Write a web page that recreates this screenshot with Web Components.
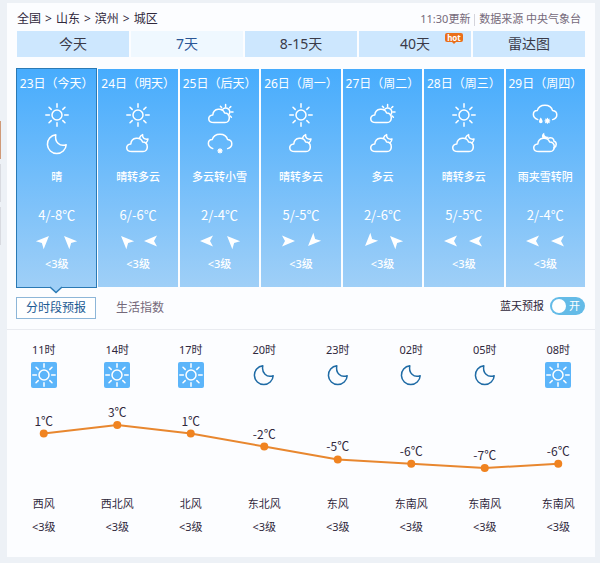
<!DOCTYPE html>
<html lang="zh-CN">
<head>
<meta charset="utf-8">
<meta name="viewport" content="width=device-width, initial-scale=1">
<title>滨州天气预报</title>
<style>
    body {
        margin: 0;
        padding: 3px 5px 6px 0;
        display: flex;
        background: #edf1f6;
        color: #30283c;
        font-family: "Noto Sans", "Noto Sans CJK SC", sans-serif;
        font-size: 11px;
        line-height: 16px;
    }

    weather-panel {
        flex: 1;
    }
</style>
</head>
<body>
<side-rail></side-rail>
<weather-panel>
    <crumb-bar slot="top" path="全国,山东,滨州,城区">11:30更新 <i></i> 数据来源 中央气象台</crumb-bar>
    <range-tabs slot="top"></range-tabs>
    <day-list slot="top"></day-list>
    <detail-bar slot="top"></detail-bar>
    <hour-forecast></hour-forecast>
</weather-panel>

<script>
const days = [
    { date: "23日（今天）", icons: ["sun", "moon"], text: "晴", temp: "4/-8℃", wind: [-45, -135] },
    { date: "24日（明天）", icons: ["sun", "cloudMoon"], text: "晴转多云", temp: "6/-6℃", wind: [-135, 180] },
    { date: "25日（后天）", icons: ["cloudSun", "snow"], text: "多云转小雪", temp: "2/-4℃", wind: [180, -135] },
    { date: "26日（周一）", icons: ["sun", "cloudMoon"], text: "晴转多云", temp: "5/-5℃", wind: [0, 135] },
    { date: "27日（周二）", icons: ["cloudSun", "cloudMoon"], text: "多云", temp: "2/-6℃", wind: [135, -135] },
    { date: "28日（周三）", icons: ["sun", "cloudMoon"], text: "晴转多云", temp: "5/-5℃", wind: [180, 180] },
    { date: "29日（周四）", icons: ["sleet", "overcast"], text: "雨夹雪转阴", temp: "2/-4℃", wind: [180, 180] }
];

const hours = [
    { time: "11时", icon: "sun", temp: 1, wind: "西风" },
    { time: "14时", icon: "sun", temp: 3, wind: "西北风" },
    { time: "17时", icon: "sun", temp: 1, wind: "北风" },
    { time: "20时", icon: "moon", temp: -2, wind: "东北风" },
    { time: "23时", icon: "moon", temp: -5, wind: "东风" },
    { time: "02时", icon: "moon", temp: -6, wind: "东南风" },
    { time: "05时", icon: "moon", temp: -7, wind: "东南风" },
    { time: "08时", icon: "sun", temp: -6, wind: "东南风" }
];

const cloud = "M6 19.6C-.8 19.6-.8 12.4 4.8 12C5.4 4.8 14.6 4.6 16.6 10C22.8 10 22.8 19.6 17 19.6Z";
const openCloud = "M4.8 16.6C-1.6 14.2-.4 7.8 4.2 7.6C6.4.6 17.6.6 19.6 7.6C25 8.4 25.4 14.8 19.6 16.6";

const icons = {
    sun: `<circle cx="12" cy="12" r="5"/>
        <path d="M12 .8V4.2M12 19.8V23.2M.8 12H4.4M19.6 12H23.2M4 4.2L6.2 6.4M17.8 17.6L20 19.8M20 4.2L17.8 6.4M6.2 17.6L4 19.8"/>`,
    moon: `<path d="M10.8 2.8C9.4 9.6 14.6 15.2 21.2 12.7A9.4 9.4 0 1 1 10.8 2.8Z"/>`,
    cloudMoon: `<path d="${cloud}"/>
        <path d="M13.4 6.2C14 4.4 15 3.2 16.6 2.6C16.2 5.6 18.4 7.8 22 7C21.8 8.6 21.2 9.8 20 11"/>`,
    cloudSun: `<path d="${cloud}"/>
        <path d="M14.2 7.2A4 4 0 1 1 20.4 12M17.6 1.6V3.4M12.4 3.2L13.6 4.6M22.8 3.6L21.6 4.8M23 9H25M22.2 13L23.4 14.2"/>`,
    snow: `<path d="${openCloud}"/>
        <path class="flake" d="M12 16.6V21M9.8 18.8H14.2M10.5 17.3L13.5 20.3M13.5 17.3L10.5 20.3"/>`,
    sleet: `<path d="${openCloud}"/>
        <path class="solid" d="M7.8 14.6C10.4 18.2 10 20.2 7.8 20.2S5.2 18.2 7.8 14.6Z"/>
        <path class="flake" d="M14.4 15.4V20.2M12 17.8H16.8M12.7 16.1L16.1 19.5M16.1 16.1L12.7 19.5"/>`,
    overcast: `<path d="${cloud}"/>
        <path d="M15 6.4C18.4 4.6 21 6.6 21 9.2C24 10 24 14.6 20.8 16"/>
        <path class="solid" d="M11.2.8C11 3.6 12.6 5.2 15.6 4.8C14.2 7.6 10.2 7.6 9.2 5.4C8.4 3.6 9.4 1.6 11.2.8Z"/>`
};

function define(name, render) {
    customElements.define(name, class extends HTMLElement {
        constructor() {
            super();
            this.attachShadow({ mode: "open" });
        }

        connectedCallback() {
            this.shadowRoot.innerHTML = render(this);
        }
    });
}

define("weather-icon", el => `
    <style>
        :host { display: block; width: 24px; height: 24px; }
        svg { display: block; overflow: visible; }
        path, circle {
            fill: none;
            stroke: currentColor;
            stroke-width: 1.5;
            stroke-linecap: round;
            stroke-linejoin: round;
        }
        .flake { stroke-width: 1.2; }
        .solid { fill: currentColor; stroke: none; }
    </style>
    <svg width="24" height="24" viewBox="0 0 24 24" aria-hidden="true">${icons[el.getAttribute("name")]}</svg>
`);

define("wind-arrow", el => `
    <style>
        :host { display: block; width: 12px; height: 12px; }
        svg { display: block; overflow: visible; }
    </style>
    <svg width="12" height="12" viewBox="-6 -6 12 12" aria-hidden="true">
        <path d="M7 0L-6 5.5L-3 0L-6 -5.5Z" fill="currentColor" transform="rotate(${el.getAttribute("angle")})"/>
    </svg>
`);

// edges of the neighbouring widgets
define("side-rail", () => `
    <style>
        :host {
            display: flex;
            flex-direction: column;
            gap: 5px;
            width: 7px;
            padding-top: 118px;
        }
        div { width: 1px; height: 38px; background: #d8dae0; }
        .warm { background: #d09a78; }
    </style>
    <div class="warm"></div><div></div><div></div>
`);

define("weather-panel", () => `
    <style>
        :host { display: block; background: #fcfdff; }
        .top { padding: 8px 10px 10px; }
    </style>
    <div class="top"><slot name="top"></slot></div>
    <slot></slot>
`);

define("crumb-bar", el => `
    <style>
        :host { display: flex; justify-content: space-between; padding-right: 4px; }
        nav { display: flex; gap: 4px; font-size: 12px; }
        a { color: inherit; text-decoration: none; }
        .source { color: #75697a; }
        ::slotted(i) {
            display: inline-block;
            width: 1px;
            height: 12px;
            margin: 0 1px;
            background: #d5d5dc;
            vertical-align: middle;
        }
    </style>
    <nav>${el.getAttribute("path").split(",").map(p => `<a href="#">${p}</a>`).join("<span>&gt;</span>")}</nav>
    <div class="source"><slot></slot></div>
`);

define("range-tabs", () => `
    <style>
        :host { display: grid; grid-template-columns: repeat(5, 1fr); gap: 2px; margin-top: 4px; }
        a {
            position: relative;
            background: #cde7fe;
            color: #3a3a48;
            font-size: 14px;
            line-height: 26px;
            text-align: center;
            text-decoration: none;
        }
        a.active { background: #eff8ff; color: #2a5696; }
        .hot {
            position: absolute;
            top: 2px;
            right: 8px;
            width: 18px;
            height: 9px;
            border-radius: 2px;
            background: #ea6f1b;
            color: #fff;
            font-size: 8px;
            font-weight: 700;
            line-height: 9px;
        }
        .hot::after {
            content: "";
            position: absolute;
            left: 7px;
            top: 9px;
            border: 2px solid transparent;
            border-top-color: #ea6f1b;
        }
    </style>
    <a href="#">今天</a>
    <a href="#" class="active">7天</a>
    <a href="#">8-15天</a>
    <a href="#">40天<span class="hot">hot</span></a>
    <a href="#">雷达图</a>
`);

define("day-list", () => `
    <style>
        :host { display: grid; grid-template-columns: repeat(7, 1fr); gap: 2px; margin-top: 12px; }
    </style>
    ${days.map((d, i) => `<day-card index="${i}"></day-card>`).join("")}
`);

define("day-card", el => {
    const d = days[el.getAttribute("index")];
    const active = el.getAttribute("index") === "0";
    return `
    <style>
        :host { display: block; position: relative; }
        button {
            display: flex;
            flex-direction: column;
            align-items: center;
            width: 100%;
            padding: 7px 0 15px;
            border: 0;
            background: linear-gradient(#47acfd, #9fcff7);
            color: #fff;
            font: inherit;
            white-space: nowrap;
        }
        button.active { outline: 1px solid #2a79b4; }
        .date { font-size: 12px; margin-bottom: 11px; }
        .icons { display: grid; gap: 5px; }
        .text { margin-top: 13px; font-weight: 500; }
        .temp {
            margin-top: 22px;
            font-family: "Noto Sans CJK SC", sans-serif;
            font-size: 13px;
        }
        .wind { display: flex; gap: 13px; margin-top: 12px; }
        .level { margin-top: 9px; font-weight: 500; }
        .notch { position: absolute; left: 33px; bottom: -7px; }
    </style>
    <button type="button" class="${active ? "active" : ""}">
        <span class="date">${d.date}</span>
        <span class="icons">${d.icons.map(n => `<weather-icon name="${n}"></weather-icon>`).join("")}</span>
        <span class="text">${d.text}</span>
        <span class="temp">${d.temp}</span>
        <span class="wind">${d.wind.map(a => `<wind-arrow angle="${a}"></wind-arrow>`).join("")}</span>
        <span class="level">&lt;3级</span>
    </button>
    ${active ? `<svg class="notch" width="12" height="8" viewBox="0 0 12 8" aria-hidden="true">
        <path d="M0 0H12V1L6 6.5L0 1Z" fill="#9fcff7"/>
        <path d="M0 1L6 6.5L12 1" fill="none" stroke="#2a79b4" stroke-width="1.3"/>
    </svg>` : ""}`;
});

define("detail-bar", () => `
    <style>
        :host { display: flex; align-items: flex-start; margin-top: 10px; }
        button {
            height: 22px;
            margin-left: -1px;
            padding: 0 9px;
            border: 1px solid transparent;
            background: none;
            color: #75697a;
            font: inherit;
            font-size: 12px;
            line-height: 20px;
        }
        button.active { border-color: #8db6d8; color: #1c5b94; background: #fff; }
        button + button { margin-left: 10px; }
        label { display: flex; align-items: center; gap: 6px; margin-left: auto; }
        .switch {
            display: flex;
            align-items: center;
            justify-content: space-between;
            box-sizing: border-box;
            width: 35px;
            height: 18px;
            padding: 0 5px 0 2px;
            border-radius: 9px;
            background: #64bbe7;
            color: #fff;
        }
        input {
            appearance: none;
            width: 14px;
            height: 14px;
            margin: 0;
            border-radius: 50%;
            background: #fff;
        }
    </style>
    <button type="button" class="active">分时段预报</button>
    <button type="button">生活指数</button>
    <label>蓝天预报<span class="switch"><input type="checkbox" checked>开</span></label>
`);

define("temp-chart", () => {
    const x = i => (i + 0.5) * 100 / hours.length + "%";
    const y = t => 37 + (3 - t) * 4.3;
    return `
    <style>
        :host { display: block; height: 100px; }
        svg { display: block; width: 100%; height: 100%; }
        line { stroke: #e8872f; stroke-width: 2; }
        circle { fill: #f08320; }
        text {
            fill: #30283c;
            font-family: "Noto Sans CJK SC", sans-serif;
            font-size: 12px;
            text-anchor: middle;
        }
    </style>
    <svg>
        ${hours.slice(1).map((h, i) => `<line x1="${x(i)}" y1="${y(hours[i].temp)}" x2="${x(i + 1)}" y2="${y(h.temp)}"/>`).join("")}
        ${hours.map((h, i) => `
            <circle cx="${x(i)}" cy="${y(h.temp)}" r="4"/>
            <text x="${x(i)}" y="${y(h.temp) - 8}">${h.temp}℃</text>`).join("")}
    </svg>`;
});

define("hour-forecast", () => `
    <style>
        :host { display: block; padding: 12px 0 22px; border-top: 1px solid #e9ebf0; }
        .row { display: grid; grid-template-columns: repeat(8, 1fr); justify-items: center; }
        .row > div { display: flex; flex-direction: column; align-items: center; }
        .head > div { gap: 4px; }
        .foot { margin-top: 8px; }
        .foot > div { gap: 7px; }
        .icon { padding: 1px; border-radius: 2px; color: #1f6ba5; }
        .icon.sun { background: #5cb5fa; color: #fff; }
    </style>
    <div class="row head">
        ${hours.map(h => `<div>${h.time}<span class="icon ${h.icon}"><weather-icon name="${h.icon}"></weather-icon></span></div>`).join("")}
    </div>
    <temp-chart></temp-chart>
    <div class="row foot">
        ${hours.map(h => `<div><span>${h.wind}</span><span>&lt;3级</span></div>`).join("")}
    </div>
`);
</script>
</body>
</html>
